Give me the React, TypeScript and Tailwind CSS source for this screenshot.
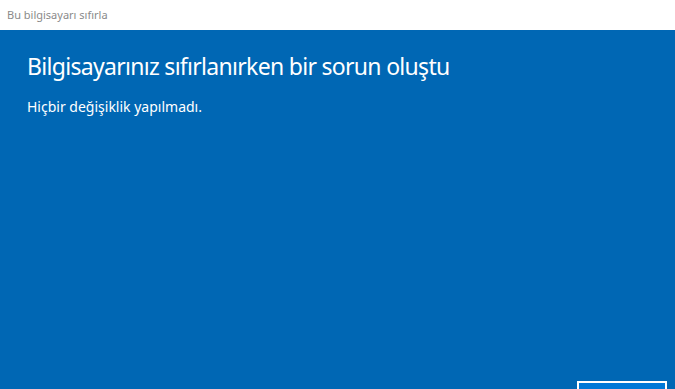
export default function App() {
  return (
    <div className="flex h-[389px] w-[675px] flex-col overflow-hidden font-['Noto_Sans',sans-serif]">
      {/* Window title bar */}
      <div className="flex h-[30px] shrink-0 items-center bg-white pl-[7px] text-[11px] text-[#8a8a8a]">
        Bu bilgisayarı sıfırla
      </div>

      {/* Error page */}
      <div className="flex flex-1 flex-col bg-[#0067b4] pl-[27px] text-white">
        <h1 className="mt-[20px] font-['Noto_Sans',sans-serif] text-[23px] leading-[32px] font-normal tracking-[-0.7px]">
          Bilgisayarınız sıfırlanırken bir sorun oluştu
        </h1>
        <p className="mt-[15px] text-[14px] leading-[20px]">Hiçbir değişiklik yapılmadı.</p>

        <div className="mt-auto flex justify-end pr-[8px]">
          <button
            type="button"
            aria-label="Kapat"
            className="h-[40px] w-[90px] translate-y-[32px] border-2 border-white bg-[#0078d7]"
          />
        </div>
      </div>
    </div>
  );
}
